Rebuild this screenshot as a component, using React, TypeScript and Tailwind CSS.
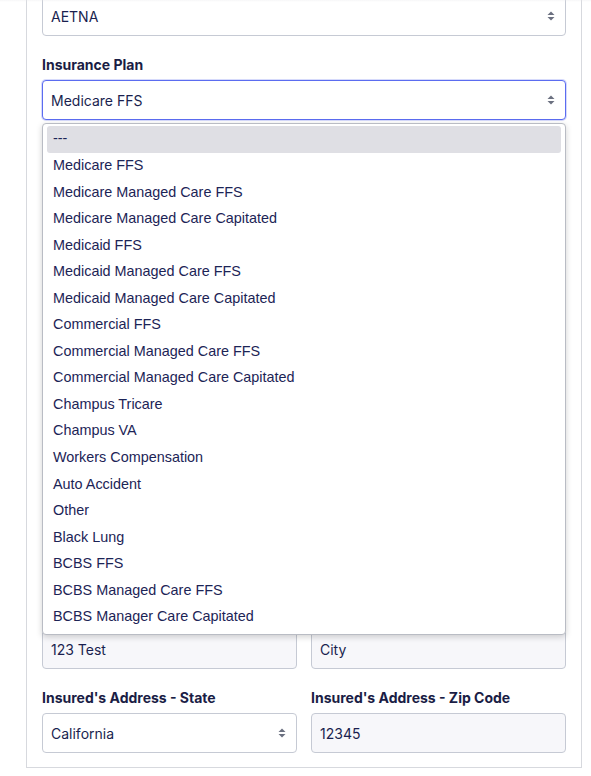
import React from "react";

const options = [
  "---",
  "Medicare FFS",
  "Medicare Managed Care FFS",
  "Medicare Managed Care Capitated",
  "Medicaid FFS",
  "Medicaid Managed Care FFS",
  "Medicaid Managed Care Capitated",
  "Commercial FFS",
  "Commercial Managed Care FFS",
  "Commercial Managed Care Capitated",
  "Champus Tricare",
  "Champus VA",
  "Workers Compensation",
  "Auto Accident",
  "Other",
  "Black Lung",
  "BCBS FFS",
  "BCBS Managed Care FFS",
  "BCBS Manager Care Capitated",
];

function Arrows() {
  return (
    <svg width="8" height="10" viewBox="0 0 8 10" className="shrink-0">
      <path d="M4 0.5 L7.5 4 L0.5 4 Z" fill="#6b7080" />
      <path d="M4 9.5 L7.5 6 L0.5 6 Z" fill="#6b7080" />
    </svg>
  );
}

function Label({ children }: { children?: React.ReactNode }) {
  return (
    <div className="mb-[5px] h-5 text-[14px] font-bold leading-5 text-[#1a1d45]">
      {children}
    </div>
  );
}

function Select({ value, focused }: { value: string; focused?: boolean }) {
  return (
    <div
      className={`flex h-10 items-center justify-between rounded-[4px] border bg-white pl-2 pr-[10px] text-[14px] text-[#1a1f4f] ${
        focused
          ? "border-[#5b6cf0] shadow-[0_0_0_1px_rgba(91,108,240,0.25)]"
          : "border-[#c6cad4]"
      }`}
    >
      <span>{value}</span>
      <Arrows />
    </div>
  );
}

function Input({ value }: { value?: string }) {
  return (
    <div className="flex h-10 items-center rounded-[4px] border border-[#c6cad4] bg-[#f7f7fa] px-2 text-[14px] text-[#1a1f4f]">
      {value}
    </div>
  );
}

function Field({ label, children }: { label?: string; children: React.ReactNode }) {
  return (
    <div>
      <Label>{label}</Label>
      {children}
    </div>
  );
}

export default function App() {
  return (
    <div
      className="relative min-h-[776px] bg-white"
      style={{ fontFamily: "Inter, 'Noto Sans', sans-serif" }}
    >
      {/* header shadow from above the fold */}
      <div className="pointer-events-none absolute left-0 right-0 top-0 h-[6px] bg-gradient-to-b from-[#e6e6e8] to-white/0" />

      <div className="ml-[26px] mr-[9px] border border-t-0 border-[#d7d9de] px-[15px] pb-[14px]">
        <div className="-mt-1">
          <Select value="AETNA" />
        </div>

        <div className="relative mt-[19px]">
          <Field label="Insurance Plan">
            <Select value="Medicare FFS" focused />
          </Field>

          {/* open dropdown list */}
          <div
            className="absolute left-0 right-0 top-[68px] z-10 rounded-[4px] border border-[#b9bcc4] bg-white pb-[4px] pt-[2px] shadow-[0_2px_6px_rgba(0,0,0,0.18)]"
            style={{ fontFamily: "'Liberation Sans', Arial, sans-serif" }}
          >
            {options.map((o, i) => (
              <div
                key={o}
                className={`mx-1 flex h-[26.55px] items-center rounded-[3px] px-[6px] text-[14.4px] text-[#1c2456] ${
                  i === 0 ? "bg-[#dfdfe4]" : ""
                }`}
              >
                {o}
              </div>
            ))}
          </div>
        </div>

        {/* fields hidden behind the open list */}
        <div className="mt-5 grid grid-cols-2 gap-x-[14px] gap-y-5">
          <Field label="Insured's ID Number">
            <Input value="123456" />
          </Field>
          <Field label="Group Number">
            <Input value="G-1" />
          </Field>
          <Field label="Insured's First Name">
            <Input value="Test" />
          </Field>
          <Field label="Insured's Last Name">
            <Input value="Patient" />
          </Field>
          <Field label="Insured's Date of Birth">
            <Input value="01/01/1970" />
          </Field>
          <Field label="Insured's Sex">
            <Select value="Male" />
          </Field>
          <Field label="Relationship">
            <Select value="Self" />
          </Field>
          <Field label="Insured's Phone">
            <Input value="5555555555" />
          </Field>
          <Field label="Employer">
            <Input value="Employer" />
          </Field>
          <Field label="Plan Name">
            <Input value="Plan" />
          </Field>
        </div>
        <div className="mt-[59px] grid grid-cols-2 gap-x-[14px] gap-y-[19px]">
          <Field label="Insured's Address - Street">
            <Input value="123 Test" />
          </Field>
          <Field label="Insured's Address - City">
            <Input value="City" />
          </Field>
          <Field label="Insured's Address - State">
            <Select value="California" />
          </Field>
          <Field label="Insured's Address - Zip Code">
            <Input value="12345" />
          </Field>
        </div>
      </div>
    </div>
  );
}
